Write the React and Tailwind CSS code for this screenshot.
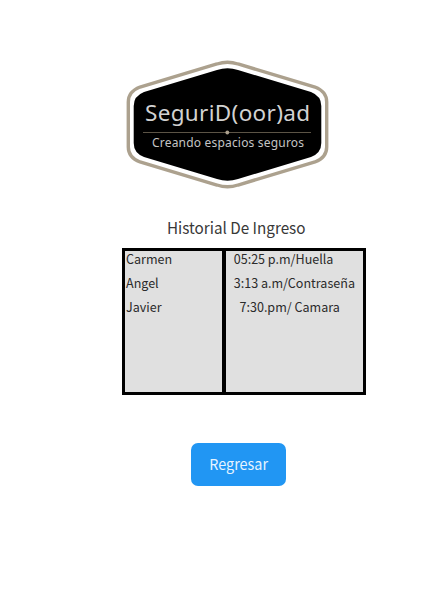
const entries = [
  { name: 'Carmen', detail: '05:25 p.m/Huella', pad: 'pl-[8px]' },
  { name: 'Angel', detail: '3:13 a.m/Contraseña', pad: 'pl-[8px]' },
  { name: 'Javier', detail: '7:30.pm/ Camara', pad: 'pl-[14px]' },
];

function Logo() {
  return (
    <svg className="ml-[126px] block h-[129px] w-[204px] font-['Noto_Sans',sans-serif]" viewBox="126 60 204 129">
      <path
        d="M128.3 102 Q128.3 91.5 140 87 L217 64 Q227.5 60.5 238 64 L315 87 Q326.7 91.5 326.7 102 V147 Q326.7 157.5 315 162 L238 185 Q227.5 188.5 217 185 L140 162 Q128.3 157.5 128.3 147 Z"
        fill="#fff"
        stroke="#aca18e"
        strokeWidth="3.4"
      />
      <path
        d="M133.7 106 Q133.7 96 144 92 L217 70 Q227.5 66.5 238 70 L311 92 Q321.3 96 321.3 106 V143 Q321.3 153 311 157 L238 179 Q227.5 182.5 217 179 L144 157 Q133.7 153 133.7 143 Z"
        fill="#000"
      />
      <text x="145" y="120.5" fontSize="22.5" fill="#d2d2d2" textLength="165">
        SeguriD(oor)ad
      </text>
      <path d="M143 132.5 H311" stroke="#5c5446" strokeWidth="1" />
      <circle cx="227.3" cy="132.5" r="1.9" fill="#aca18e" />
      <text x="152" y="146.5" fontSize="12" fill="#c4c4c4" textLength="152">
        Creando espacios seguros
      </text>
    </svg>
  );
}

export default function App() {
  return (
    <main className="h-[593px] w-[432px] overflow-hidden bg-white pt-[60px] font-['Noto_Sans_CJK_SC',sans-serif] text-[#2b2b2b]">
      <Logo />
      <h1 className="mt-[26px] ml-[167px] h-6 w-fit origin-left scale-x-[.952] text-base leading-6 whitespace-nowrap text-[#383838]">
        Historial De Ingreso
      </h1>
      <section className="mt-[9px] ml-[122px] flex h-[147px] w-[244px] border-[3px] border-black bg-[#e0e0e0] text-[13px] leading-6 whitespace-nowrap">
        <ul className="w-[101px] border-r-4 border-black pl-px">
          {entries.map((e) => (
            <li key={e.name} className="w-fit origin-left -translate-y-1 scale-x-[.965]">{e.name}</li>
          ))}
        </ul>
        <ul className="flex-1">
          {entries.map((e) => (
            <li key={e.name} className={`w-fit origin-left -translate-y-1 scale-x-[.965] ${e.pad}`}>{e.detail}</li>
          ))}
        </ul>
      </section>
      <button className="mt-[48px] ml-[191px] flex h-[43px] w-[95px] items-center justify-center rounded-[7px] bg-[#2196f3] text-[15px] text-[#e6f4ff]">
        <span className="scale-x-[.96]">Regresar</span>
      </button>
    </main>
  );
}
